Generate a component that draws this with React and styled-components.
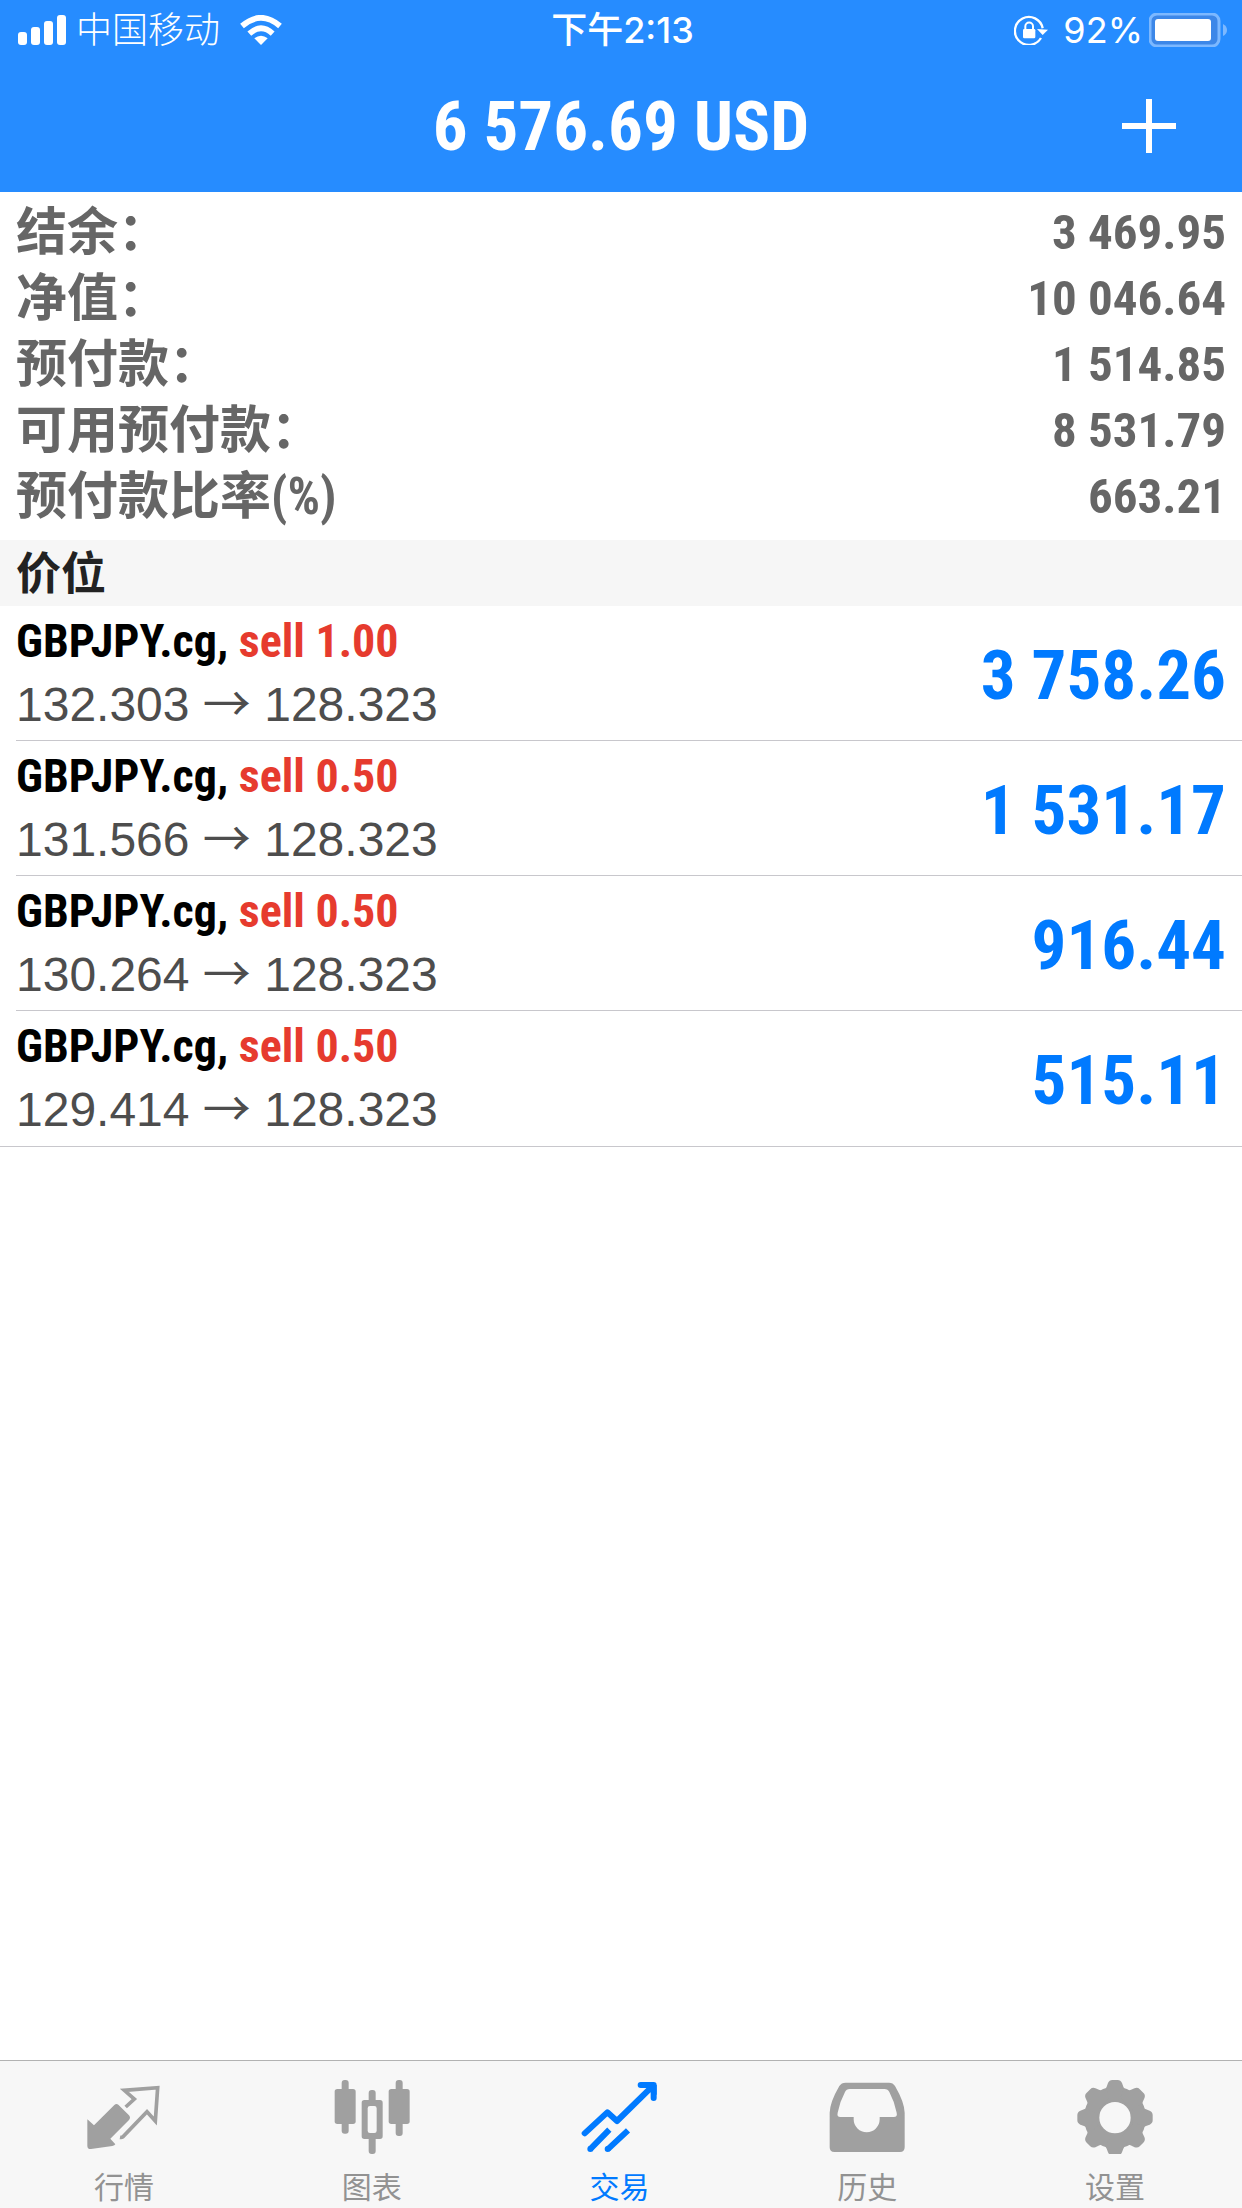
import React from "react";
import styled, { createGlobalStyle } from "styled-components";

const cjk = `"Noto Sans CJK SC", sans-serif`;
const condensed = `"Roboto Condensed", "Liberation Sans", ${cjk}`;

const GlobalStyle = createGlobalStyle`
  *, *::before, *::after { box-sizing: border-box; }
  body { margin: 0; background: #fff; font-family: "Liberation Sans", ${cjk}; }
`;

const Page = styled.div`
  display: flex;
  flex-direction: column;
  min-height: 100vh;
`;

const Header = styled.header`
  background: #268cff;
  color: #fff;
`;

const StatusBar = styled.div`
  display: grid;
  grid-template-columns: 1fr auto 1fr;
  align-items: center;
  height: 60px;
  padding: 0 15px 0 18px;
  font: 400 36px/60px Inter, ${cjk};
`;

const StatusSide = styled.div`
  display: flex;
  align-items: center;
  justify-content: ${(p) => (p.$end ? "flex-end" : "flex-start")};
  gap: ${(p) => p.$gap}px;
`;

const Carrier = styled.span`
  margin-right: 10px;
  font-weight: 300;
`;

const Clock = styled.time`
  font-weight: 500;
`;

const Percent = styled.span`
  margin-left: 9px;
`;

const TitleBar = styled.div`
  display: grid;
  grid-template-columns: 1fr auto 1fr;
  align-items: center;
  height: 132px;
  padding: 0 50px;
`;

const Title = styled.h1`
  grid-column: 2;
  margin: 0;
  padding-top: 2px;
  font: 700 69px/84px ${condensed};
`;

const AddButton = styled.button`
  justify-self: end;
  display: flex;
  padding: 16px;
  border: 0;
  background: none;
  color: inherit;
`;

const Main = styled.main`
  flex: 1;
`;

const Summary = styled.dl`
  margin: 0;
  padding: 8px 16px 10px;
  color: #666;
`;

const SummaryRow = styled.div`
  display: flex;
  justify-content: space-between;
  font-family: ${condensed};
  font-weight: 700;
  line-height: 66px;
`;

const SummaryLabel = styled.dt`
  font-size: 51px;
`;

const SummaryValue = styled.dd`
  margin: 0;
  font-size: 49px;
`;

const SectionTitle = styled.h2`
  margin: 0;
  padding: 4px 16px 0;
  background: #f6f6f6;
  color: #222;
  font: 700 45px/62px ${condensed};
`;

const Positions = styled.ul`
  margin: 0;
  padding: 0;
  list-style: none;
  border-bottom: 1px solid #c8c7cc;
`;

const Position = styled.li`
  display: flex;
  align-items: center;
  justify-content: space-between;
  margin-left: 16px;
  padding: 4px 16px 4px 0;
  border-bottom: 1px solid #c8c7cc;

  &:last-child { border-bottom-color: transparent; }
`;

const Symbol = styled.div`
  color: #000;
  font: 700 46px/63px ${condensed};
`;

const Side = styled.span`
  color: #e63b2e;
`;

const Prices = styled.div`
  color: #4d4d4d;
  font-size: 48px;
  line-height: 63px;
`;

const Arrow = styled.span`
  font-family: ${cjk};
  line-height: 0;
`;

const Profit = styled.div`
  padding-top: 5px;
  color: #007aff;
  font: 700 69px/84px ${condensed};
`;

const TabBar = styled.nav`
  display: flex;
  padding: 17px 3px 5px 0;
  border-top: 1px solid #b2b2b2;
  background: #f7f7f7;
`;

const Tab = styled.a`
  flex: 1;
  display: flex;
  flex-direction: column;
  align-items: center;
  gap: 13px;
  color: ${(p) => (p.$active ? "#007aff" : "#929292")};
  font: 400 30px/36px ${cjk};
  text-decoration: none;

  svg { color: ${(p) => (p.$active ? "#007aff" : "#a0a0a0")}; }
`;

const SignalIcon = () => (
  <svg width="48" height="30" viewBox="0 0 48 30" fill="currentColor" aria-hidden="true">
    <rect x="0" y="17" width="9" height="13" rx="3" />
    <rect x="13" y="12" width="9" height="18" rx="3" />
    <rect x="26" y="6" width="9" height="24" rx="3" />
    <rect x="39" y="0" width="9" height="30" rx="3" />
  </svg>
);

const WifiIcon = () => (
  <svg width="42" height="30" viewBox="720 45 126 90" aria-hidden="true">
    <g fill="none" stroke="currentColor" strokeWidth="17">
      <path d="M726 78Q783 29 840 78" />
      <path d="M748 101Q783 69 818 101" />
    </g>
    <path fill="currentColor" d="M763 115Q783 99 803 115L783 135Z" />
  </svg>
);

const LockIcon = () => (
  <svg width="34" height="30" viewBox="218 44 102 90" aria-hidden="true">
    <path fill="none" stroke="currentColor" strokeWidth="7" d="M299 113A42 42 0 1 1 304 84" />
    <path fill="currentColor" d="M287 86L320 88L304 104Z" />
    <rect fill="currentColor" x="245" y="86" width="37" height="28" rx="4" />
    <path fill="none" stroke="currentColor" strokeWidth="6" d="M252 88V78A11 11 0 0 1 275 78V88" />
  </svg>
);

const BatteryIcon = () => (
  <svg width="78" height="34" viewBox="0 0 78 34" aria-hidden="true">
    <rect x="1" y="1" width="69" height="32" rx="7" fill="#3c87e8" stroke="#7cb8ff" strokeWidth="3" />
    <rect x="6" y="6" width="56" height="22" rx="3" fill="#fff" />
    <path d="M74 11Q78 13 78 17T74 23Z" fill="#7cb8ff" />
  </svg>
);

const PlusIcon = () => (
  <svg width="54" height="54" viewBox="0 0 54 54" aria-hidden="true">
    <path d="M27 0V54M0 27H54" stroke="currentColor" strokeWidth="6" />
  </svg>
);

const TabIcon = ({ x, children }) => (
  <svg width="76" height="76" viewBox={`${x} 114 228 228`} fill="currentColor" aria-hidden="true">
    {children}
  </svg>
);

const QuotesIcon = () => (
  <TabIcon x={257}>
    <path d="M261 238L281 256L342 195Q348 189 354 194L386 226Q392 233 386 240L330 296L345 313Q343 317 336 318L272 327Q261 328 261 317Z" />
    <path
      d="M376 201L402 177L372 151L472 143L465 243L440 215L367 291Q364 293 359 292"
      fill="none"
      stroke="currentColor"
      strokeWidth="11"
    />
  </TabIcon>
);

const ChartIcon = () => (
  <TabIcon x={1003}>
    <rect x="1005" y="147" width="63" height="105" rx="8" />
    <rect x="1026" y="120" width="21" height="161" rx="9" />
    <rect x="1167" y="147" width="63" height="105" rx="8" />
    <rect x="1188" y="120" width="21" height="168" rx="9" />
    <rect x="1107" y="150" width="21" height="40" rx="9" />
    <rect x="1107" y="287" width="21" height="55" rx="9" />
    <path fillRule="evenodd" d="M1094 180H1141Q1149 180 1149 188V289Q1149 297 1141 297H1094Q1086 297 1086 289V188Q1086 180 1094 180ZM1111 198Q1104 198 1104 205V272Q1104 279 1111 279H1124Q1131 279 1131 272V205Q1131 198 1124 198Z" />
  </TabIcon>
);

const TradeIcon = () => (
  <TabIcon x={124}>
    <g fill="none" stroke="currentColor" strokeWidth="18" strokeLinejoin="round">
      <path strokeLinecap="round" d="M135 280L203 217L232 243L338 139M303 135H342V174" />
      <path d="M209 269L151 328M265 271L204 328" />
    </g>
    <circle cx="152" cy="327" r="9" />
    <circle cx="204" cy="327" r="9" />
    <path d="M320 135H351V165Z" />
  </TabIcon>
);

const HistoryIcon = () => (
  <TabIcon x={868}>
    <path fillRule="evenodd" d="M918 128H1048Q1060 128 1066 138Q1094 186 1095 218V322Q1095 336 1081 336H884Q870 336 870 322V218Q871 186 899 138Q905 128 918 128ZM930 147Q920 147 916 156Q900 186 894 218Q891 231 902 231H942V238A39 39 0 0 0 1020 238V231H1062Q1074 231 1071 218Q1065 186 1049 156Q1045 147 1034 147Z" />
  </TabIcon>
);

const toothAngles = [0, 45, 90, 135, 180, 225, 270, 315];

const SettingsIcon = () => (
  <TabIcon x={415}>
    <circle cx="529" cy="233" r="70" fill="none" stroke="currentColor" strokeWidth="46" />
    {toothAngles.map((angle) => (
      <path
        key={angle}
        transform={`rotate(${angle} 529 233)`}
        d="M490 158Q500 152 504 140L508 129Q512 120 521 120H537Q546 120 550 129L554 140Q558 152 568 158L560 180H498Z"
      />
    ))}
  </TabIcon>
);

const summary = [
  ["结余：", "3 469.95"],
  ["净值：", "10 046.64"],
  ["预付款：", "1 514.85"],
  ["可用预付款：", "8 531.79"],
  ["预付款比率(%)", "663.21"],
];

const positions = [
  { volume: "1.00", open: "132.303", current: "128.323", profit: "3 758.26" },
  { volume: "0.50", open: "131.566", current: "128.323", profit: "1 531.17" },
  { volume: "0.50", open: "130.264", current: "128.323", profit: "916.44" },
  { volume: "0.50", open: "129.414", current: "128.323", profit: "515.11" },
];

const tabs = [
  { label: "行情", Icon: QuotesIcon },
  { label: "图表", Icon: ChartIcon },
  { label: "交易", Icon: TradeIcon, active: true },
  { label: "历史", Icon: HistoryIcon },
  { label: "设置", Icon: SettingsIcon },
];

export default function App() {
  return (
    <Page>
      <GlobalStyle />
      <Header>
        <StatusBar>
          <StatusSide $gap={10}>
            <SignalIcon />
            <Carrier>中国移动</Carrier>
            <WifiIcon />
          </StatusSide>
          <Clock>下午2:13</Clock>
          <StatusSide $end $gap={6}>
            <LockIcon />
            <Percent>92%</Percent>
            <BatteryIcon />
          </StatusSide>
        </StatusBar>
        <TitleBar>
          <Title>6 576.69 USD</Title>
          <AddButton type="button" aria-label="+">
            <PlusIcon />
          </AddButton>
        </TitleBar>
      </Header>
      <Main>
        <Summary>
          {summary.map(([label, value]) => (
            <SummaryRow key={label}>
              <SummaryLabel>{label}</SummaryLabel>
              <SummaryValue>{value}</SummaryValue>
            </SummaryRow>
          ))}
        </Summary>
        <SectionTitle>价位</SectionTitle>
        <Positions>
          {positions.map((p) => (
            <Position key={p.open}>
              <div>
                <Symbol>
                  GBPJPY.cg, <Side>sell {p.volume}</Side>
                </Symbol>
                <Prices>
                  {p.open} <Arrow>→</Arrow> {p.current}
                </Prices>
              </div>
              <Profit>{p.profit}</Profit>
            </Position>
          ))}
        </Positions>
      </Main>
      <TabBar>
        {tabs.map(({ label, Icon, active }) => (
          <Tab key={label} href="#" $active={active} aria-current={active ? "page" : undefined}>
            <Icon />
            {label}
          </Tab>
        ))}
      </TabBar>
    </Page>
  );
}
